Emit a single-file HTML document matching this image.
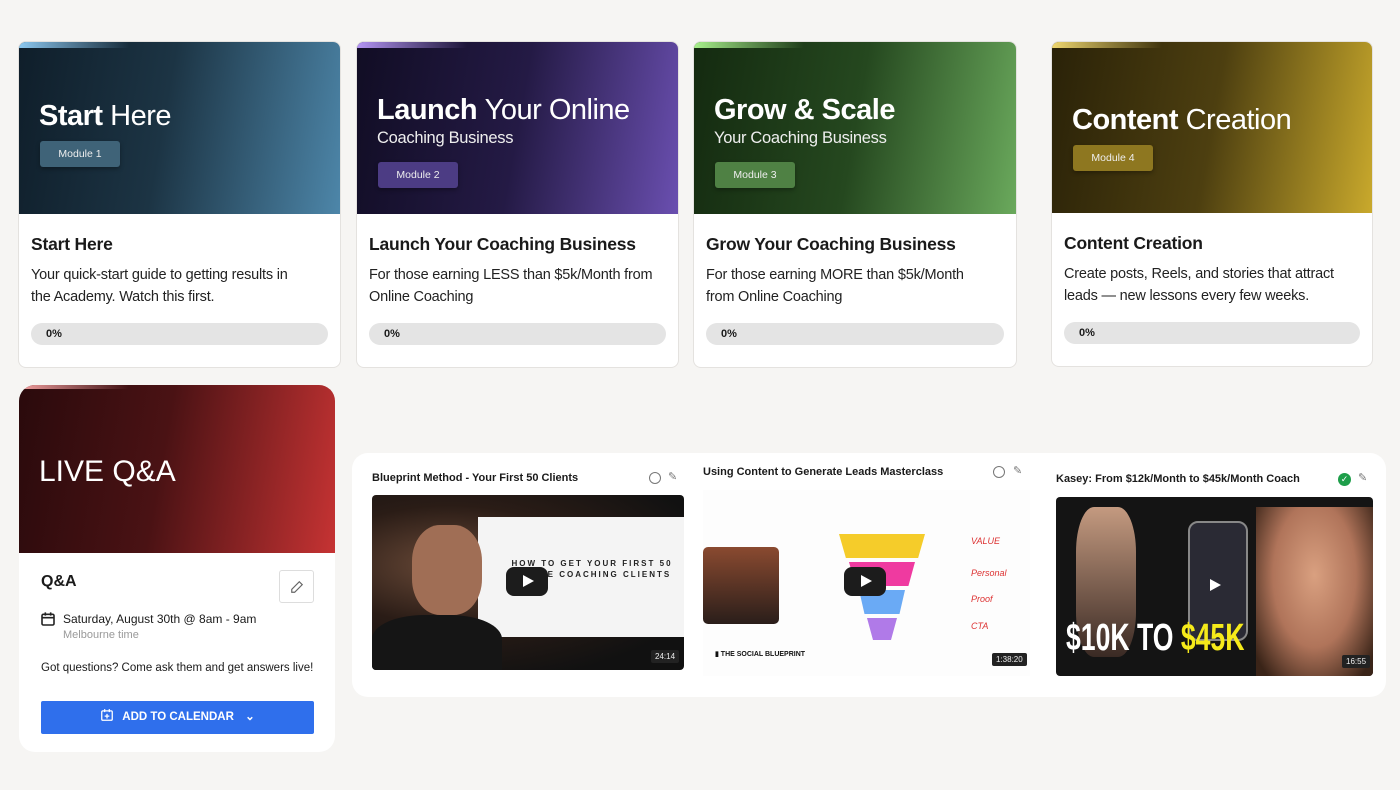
<!DOCTYPE html>
<html><head><meta charset="utf-8"><style>
*{box-sizing:border-box;margin:0;padding:0}
body{width:1400px;height:790px;background:#f6f5f3;font-family:"Liberation Sans",sans-serif;position:relative;overflow:hidden;color:#1a1a1a}
.card{position:absolute;background:#fff;border:1px solid #e4e2df;border-radius:8px;overflow:hidden}
.hd{position:absolute;left:0;top:0;right:0;height:172px;overflow:hidden}
.hd .bar{position:absolute;left:0;top:0;height:6px;width:110px}
.hd h2{position:absolute;left:20px;color:#fff;font-size:29px;font-weight:bold;letter-spacing:-.5px;white-space:nowrap}
.hd h2 span{font-weight:normal}
.hd .sub{position:absolute;left:20px;color:#eee;font-size:16.5px;letter-spacing:-.3px}
.hd .mod{position:absolute;left:21px;width:80px;height:26px;border-radius:3px;color:#eee;font-size:10.5px;text-align:center;line-height:26px;box-shadow:0 2px 4px rgba(0,0,0,.3)}
.t{position:absolute;left:12px;top:192px;font-size:17.5px;font-weight:bold;letter-spacing:-.2px}
.d{position:absolute;left:12px;top:222px;font-size:14.5px;letter-spacing:-.2px;line-height:22px;color:#222;white-space:nowrap}
.p{position:absolute;left:12px;right:12px;top:281px;height:22px;border-radius:11px;background:#e4e4e4;font-size:11px;font-weight:bold;padding-left:15px;line-height:22px}
.vt{position:absolute;font-size:11px;font-weight:bold;color:#1a1a1a}
.ic{position:absolute;width:12px;height:12px;border:1px solid #777;border-radius:50%}
.play{position:absolute;width:42px;height:29px;background:#1c1c1c;border-radius:8px}
.play:after{content:"";position:absolute;left:17px;top:8px;border-left:11px solid #fff;border-top:6.5px solid transparent;border-bottom:6.5px solid transparent}
.dur{position:absolute;background:#222;color:#eee;font-size:8px;padding:2px 4px;border-radius:2px}
</style></head><body>

<div class="card" style="left:18px;top:41px;width:323px;height:327px">
 <div class="hd" style="background:linear-gradient(100deg,#0f1e2a 0%,#1c3444 45%,#4d86a9 100%)"><div class="bar" style="background:linear-gradient(90deg,#8cc8f0,transparent)"></div>
  <h2 style="top:58px">Start <span>Here</span></h2><div class="mod" style="top:99px;background:#3f6378">Module 1</div></div>
 <div class="t">Start Here</div>
 <div class="d">Your quick-start guide to getting results in<br>the Academy. Watch this first.</div>
 <div class="p">0%</div>
</div>

<div class="card" style="left:356px;top:41px;width:323px;height:327px">
 <div class="hd" style="background:linear-gradient(100deg,#110d24 0%,#241a45 50%,#6a4fb0 100%)"><div class="bar" style="background:linear-gradient(90deg,#b495f5,transparent)"></div>
  <h2 style="top:52px">Launch <span>Your Online</span></h2><div class="sub" style="top:87px">Coaching Business</div><div class="mod" style="top:120px;background:#4c3c84">Module 2</div></div>
 <div class="t">Launch Your Coaching Business</div>
 <div class="d">For those earning LESS than $5k/Month from<br>Online Coaching</div>
 <div class="p">0%</div>
</div>

<div class="card" style="left:693px;top:41px;width:324px;height:327px">
 <div class="hd" style="background:linear-gradient(100deg,#142a10 0%,#25481f 50%,#6aa95c 100%)"><div class="bar" style="background:linear-gradient(90deg,#a8f08c,transparent)"></div>
  <h2 style="top:52px">Grow &amp; Scale</h2><div class="sub" style="top:87px">Your Coaching Business</div><div class="mod" style="top:120px;background:#4f8144">Module 3</div></div>
 <div class="t">Grow Your Coaching Business</div>
 <div class="d">For those earning MORE than $5k/Month<br>from Online Coaching</div>
 <div class="p">0%</div>
</div>

<div class="card" style="left:1051px;top:41px;width:322px;height:326px">
 <div class="hd" style="background:linear-gradient(100deg,#2a2208 0%,#4d3f10 50%,#c9a92c 100%);height:171px"><div class="bar" style="background:linear-gradient(90deg,#f0d870,transparent)"></div>
  <h2 style="top:62px">Content <span>Creation</span></h2><div class="mod" style="top:103px;background:#8e7720">Module 4</div></div>
 <div class="t" style="top:191px">Content Creation</div>
 <div class="d" style="top:221px">Create posts, Reels, and stories that attract<br>leads — new lessons every few weeks.</div>
 <div class="p" style="top:280px">0%</div>
</div>

<div class="card" style="left:19px;top:385px;width:316px;height:367px;border-radius:16px;border:none">
 <div style="position:absolute;left:0;top:0;right:0;height:168px;background:linear-gradient(100deg,#2a0a0c 0%,#4a1214 45%,#c63333 100%)">
  <div style="position:absolute;left:0;top:0;width:110px;height:4px;background:linear-gradient(90deg,#f5a0a0,transparent)"></div>
  <div style="position:absolute;left:20px;top:70px;color:#fff;font-size:30px">LIVE Q&amp;A</div></div>
 <div style="position:absolute;left:22px;top:188px;font-size:16px;font-weight:bold">Q&amp;A</div>
 <div style="position:absolute;left:260px;top:185px;width:35px;height:33px;border:1px solid #ddd;border-radius:3px">
  <svg width="14" height="14" viewBox="0 0 24 24" style="position:absolute;left:10px;top:9px" fill="none" stroke="#666" stroke-width="2"><path d="M16 3l5 5L8 21H3v-5z"/></svg></div>
 <svg width="16" height="16" viewBox="0 0 24 24" style="position:absolute;left:21px;top:226px" fill="none" stroke="#222" stroke-width="2.4"><rect x="3" y="5" width="18" height="16" rx="2"/><path d="M3 10h18M8 2v5M16 2v5"/></svg>
 <div style="position:absolute;left:44px;top:227px;font-size:12px">Saturday, August 30th @ 8am - 9am</div>
 <div style="position:absolute;left:44px;top:244px;font-size:11px;color:#999">Melbourne time</div>
 <div style="position:absolute;left:22px;top:277px;font-size:11.5px">Got questions? Come ask them and get answers live!</div>
 <div style="position:absolute;left:22px;top:316px;width:273px;height:33px;background:#2f6fec;border-radius:2px;color:#fff;font-size:11.5px;font-weight:bold;text-align:center;line-height:33px">
  <svg width="14" height="14" viewBox="0 0 24 24" style="vertical-align:-2px;margin-right:8px" fill="none" stroke="#fff" stroke-width="2.2"><rect x="3" y="5" width="18" height="16" rx="2"/><path d="M8 2v5M16 2v5M12 10v8M8 14h8"/></svg>ADD TO CALENDAR <span style="margin-left:8px">⌄</span></div>
</div>

<div style="position:absolute;left:352px;top:453px;width:1034px;height:244px;background:#fff;border-radius:16px"></div>

<div class="vt" style="left:372px;top:472px">Blueprint Method - Your First 50 Clients</div>
<div class="ic" style="left:649px;top:472px"></div><div style="position:absolute;left:668px;top:470px;font-size:11px;color:#777">✎</div>
<div style="position:absolute;left:372px;top:495px;width:312px;height:175px;border-radius:4px;overflow:hidden;background:radial-gradient(ellipse at 25% 40%,#6a4a38 0%,#2a1c16 40%,#111 80%)">
 <div style="position:absolute;left:106px;top:22px;width:210px;height:120px;background:#f4f4f4"></div>
 <div style="position:absolute;left:125px;top:63px;font-size:8px;letter-spacing:2px;font-weight:bold;color:#222;width:190px;text-align:center;line-height:11px">HOW TO GET YOUR FIRST 50<br>ONLINE COACHING CLIENTS</div>
 <div style="position:absolute;left:40px;top:30px;width:70px;height:90px;border-radius:40%;background:#a06e55"></div>
 <div style="position:absolute;left:0;top:120px;width:130px;height:60px;background:#151515;border-radius:40% 40% 0 0"></div>
 <div class="play" style="left:134px;top:72px"></div>
 <div class="dur" style="left:279px;top:155px">24:14</div>
</div>

<div class="vt" style="left:703px;top:466px">Using Content to Generate Leads Masterclass</div>
<div class="ic" style="left:993px;top:466px"></div><div style="position:absolute;left:1013px;top:464px;font-size:11px;color:#777">✎</div>
<div style="position:absolute;left:703px;top:490px;width:327px;height:186px;background:#fdfdfd">
 <div style="position:absolute;left:0;top:57px;width:76px;height:77px;border-radius:5px;background:linear-gradient(#8a4a30,#2a1e1a)"></div>
 <div style="position:absolute;left:136px;top:44px;width:86px;height:24px;background:#f5cc2a;clip-path:polygon(0 0,100% 0,92% 100%,8% 100%)"></div>
 <div style="position:absolute;left:146px;top:72px;width:66px;height:24px;background:#ef3aa0;clip-path:polygon(0 0,100% 0,90% 100%,10% 100%)"></div>
 <div style="position:absolute;left:156px;top:100px;width:46px;height:24px;background:#6aaaf5;clip-path:polygon(0 0,100% 0,88% 100%,12% 100%)"></div>
 <div style="position:absolute;left:164px;top:128px;width:30px;height:22px;background:#b07ae8;clip-path:polygon(0 0,100% 0,80% 100%,20% 100%)"></div>
 <div style="position:absolute;left:268px;top:46px;font-size:9px;color:#d33;font-style:italic">VALUE</div>
 <div style="position:absolute;left:268px;top:78px;font-size:9px;color:#d33;font-style:italic">Personal</div>
 <div style="position:absolute;left:268px;top:104px;font-size:9px;color:#d33;font-style:italic">Proof</div>
 <div style="position:absolute;left:268px;top:131px;font-size:9px;color:#d33;font-style:italic">CTA</div>
 <div style="position:absolute;left:12px;top:160px;font-size:7px;font-weight:bold;color:#111">▮ THE SOCIAL BLUEPRINT</div>
 <div class="play" style="left:141px;top:77px"></div>
 <div class="dur" style="left:289px;top:163px">1:38:20</div>
</div>

<div class="vt" style="left:1056px;top:473px">Kasey: From $12k/Month to $45k/Month Coach</div>
<div style="position:absolute;left:1338px;top:473px;width:13px;height:13px;border-radius:50%;background:#1e9e4a;color:#fff;font-size:9px;text-align:center;line-height:13px">✓</div>
<div style="position:absolute;left:1358px;top:471px;font-size:11px;color:#777">✎</div>
<div style="position:absolute;left:1056px;top:497px;width:317px;height:179px;border-radius:4px;overflow:hidden;background:#141414">
 <div style="position:absolute;left:20px;top:10px;width:60px;height:150px;background:linear-gradient(#c49a80,#3a2a24);border-radius:30%"></div>
 <div style="position:absolute;left:132px;top:24px;width:60px;height:120px;background:#2a2a34;border:2px solid #888;border-radius:10px"></div>
 <div style="position:absolute;left:200px;top:10px;width:117px;height:170px;background:radial-gradient(ellipse at 50% 40%,#d9a080 0%,#b0745a 50%,#3a2418 90%)"></div>
 <div style="position:absolute;left:10px;top:120px;font-size:38px;font-weight:bold;color:#fff;transform:scaleX(.7);transform-origin:left;white-space:nowrap">$10K TO <span style="color:#f5ea1a">$45K</span></div>
 <div class="play" style="left:137px;top:74px;background:none"></div>
 <div class="dur" style="left:286px;top:158px">16:55</div>
</div>
</body></html>
